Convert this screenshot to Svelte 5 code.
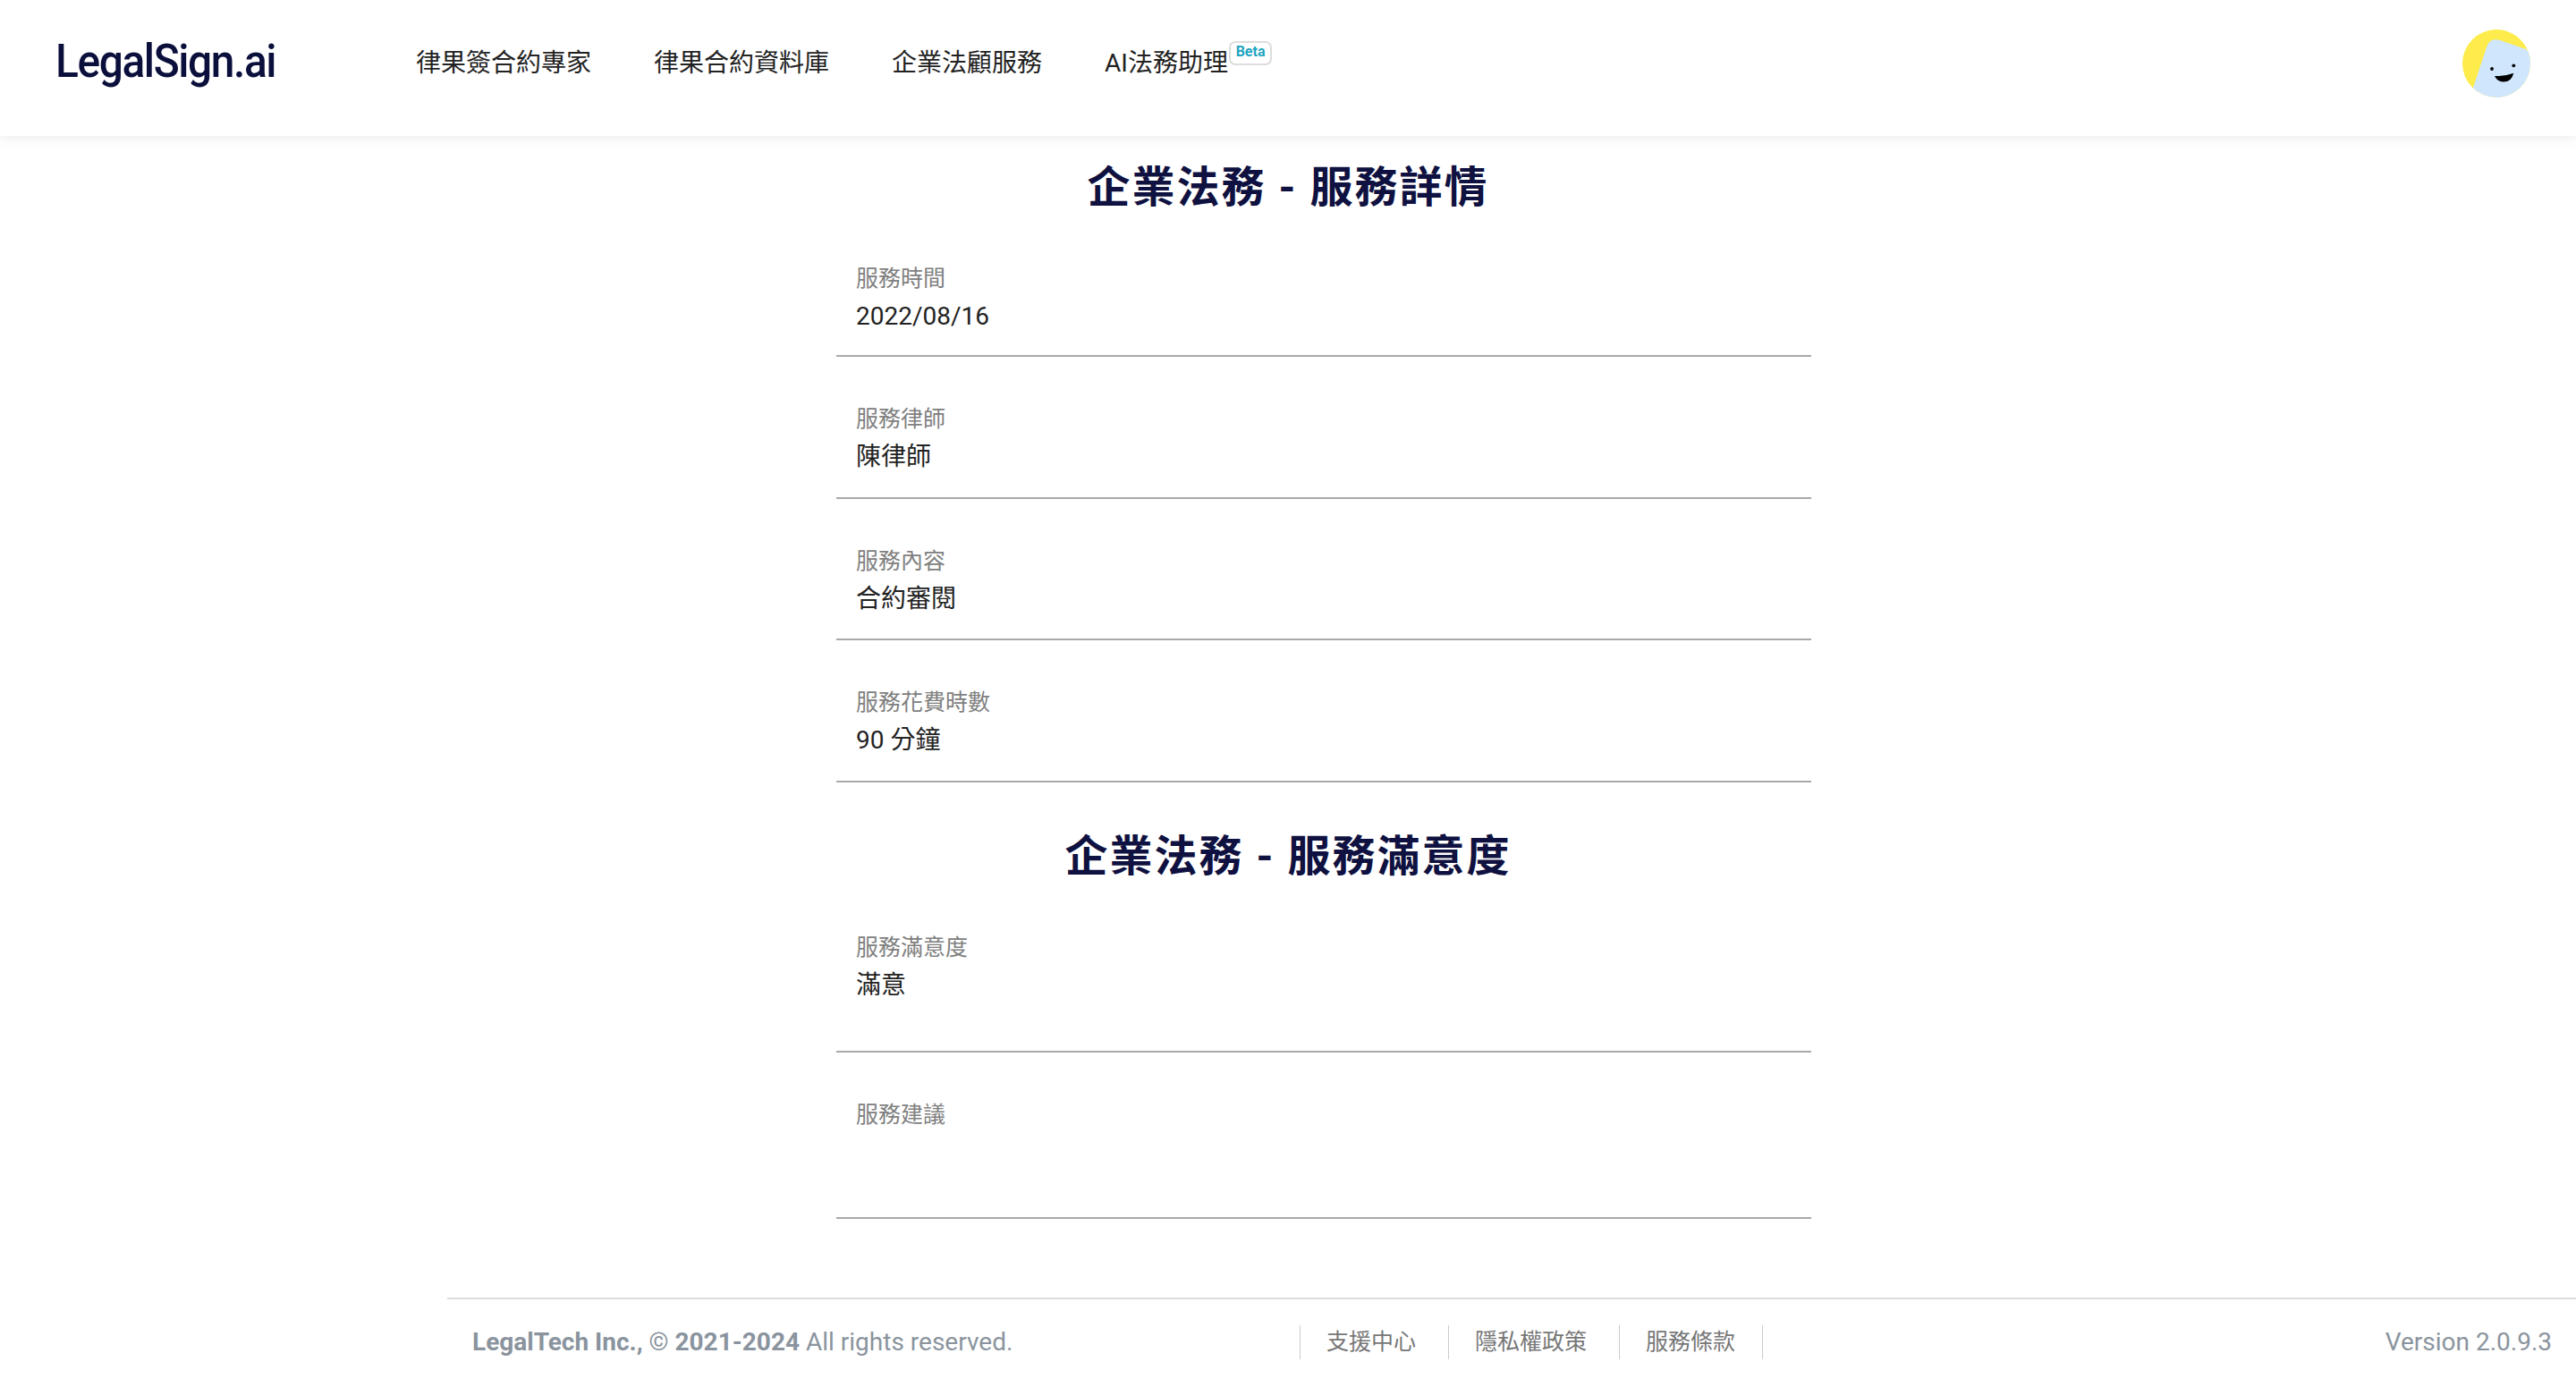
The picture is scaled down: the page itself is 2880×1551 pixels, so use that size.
<script lang="ts">
	const navItems = ['律果簽合約專家', '律果合約資料庫', '企業法顧服務'];
	const details = [
		{ label: '服務時間', value: '2022/08/16' },
		{ label: '服務律師', value: '陳律師' },
		{ label: '服務內容', value: '合約審閱' },
		{ label: '服務花費時數', value: '90 分鐘' }
	];
	const footerLinks = ['支援中心', '隱私權政策', '服務條款'];
</script>

<header class="topbar">
	<div class="logo-box"><div class="logo">LegalSign.ai</div></div>
	<nav class="nav">
		{#each navItems as item}
			<span>{item}</span>
		{/each}
		<span class="ai-item">AI法務助理<em class="beta">Beta</em></span>
	</nav>
	<svg class="avatar" viewBox="0 0 76 76" aria-label="avatar">
		<defs>
			<clipPath id="round"><circle cx="38" cy="38" r="38" /></clipPath>
		</defs>
		<g clip-path="url(#round)">
			<rect width="76" height="76" fill="#fdec4b" />
			<path d="M12 65 L27 20 Q30 9 42 12 L71 22 L90 40 L60 90 L20 90 Z" fill="#cfe6fd" />
			<circle cx="33" cy="44" r="1.9" fill="#000" />
			<circle cx="57.3" cy="40.3" r="1.9" fill="#000" />
			<path d="M36 52 Q47 52.5 57.3 48.7 Q55 58.5 46 58.5 Q39 58.5 36 52 Z" fill="#000" />
		</g>
	</svg>
</header>

<main class="content">
	<h2 class="first">企業法務 - 服務詳情</h2>
	<section class="fields">
		{#each details as row}
			<div class="field">
				<div class="label">{row.label}</div>
				<div class="value">{row.value}</div>
			</div>
		{/each}
	</section>
	<h2 class="second">企業法務 - 服務滿意度</h2>
	<section class="fields">
		<div class="field tall">
			<div class="label">服務滿意度</div>
			<div class="value">滿意</div>
		</div>
		<div class="field advice">
			<div class="label">服務建議</div>
			<div class="value"></div>
		</div>
	</section>
</main>

<footer class="footer">
	<div class="copy"><b>LegalTech Inc.,</b> © <b>2021-2024</b> All rights reserved.</div>
	<div class="links">
		{#each footerLinks as link}
			<span>{link}</span>
		{/each}
	</div>
	<div class="version">Version 2.0.9.3</div>
</footer>

<style>
	:global(body) {
		margin: 0;
		background: #fff;
		font-family: Roboto, 'Noto Sans CJK TC', sans-serif;
		font-weight: 400;
		color: #222;
	}
	.topbar {
		display: flex;
		align-items: center;
		height: 152px;
		padding: 0 51px 0 62px;
		background: #fff;
		box-shadow: 0 2px 14px rgba(0, 0, 0, 0.08);
		box-sizing: border-box;
	}
	.logo-box {
		width: 403px;
		margin-top: -16px;
	}
	.logo {
		display: inline-block;
		font-size: 52px;
		font-weight: 500;
		letter-spacing: -1.5px;
		color: #0b0f3b;
		transform: scaleX(0.92);
		transform-origin: left center;
	}
	.nav {
		display: flex;
		gap: 70px;
		flex: 1;
		font-size: 28px;
		margin-top: -16px;
		color: #222;
	}
	.ai-item {
		position: relative;
	}
	.beta {
		position: absolute;
		left: 139px;
		top: -2px;
		box-sizing: border-box;
		width: 48px;
		height: 27px;
		border: 2px solid #ddd;
		border-radius: 7px;
		font-size: 16px;
		font-style: normal;
		font-weight: 700;
		line-height: 19px;
		text-align: center;
		color: #1fa5c0;
	}
	.avatar {
		width: 76px;
		height: 76px;
		margin-top: -10px;
	}
	.content {
		display: flex;
		flex-direction: column;
	}
	h2 {
		margin: 0;
		font-size: 48px;
		font-weight: 700;
		letter-spacing: 2px;
		line-height: 64px;
		text-align: center;
		color: #0f1140;
	}
	.first {
		margin-top: 26px;
		margin-bottom: 24px;
	}
	.second {
		margin-top: 51px;
		margin-bottom: 40px;
	}
	.fields {
		width: 1090px;
		margin-left: 935px;
		display: flex;
		flex-direction: column;
	}
	.field {
		height: 158.67px;
		box-sizing: border-box;
		padding: 52px 22px 0;
		border-bottom: 2px solid #a9a9a9;
	}
	.field:first-child {
		height: 133px;
		padding-top: 28px;
	}
	.field.tall {
		height: 147px;
		padding-top: 12px;
	}
	.field.advice {
		height: 186px;
		padding-top: 52px;
	}
	.label {
		font-size: 25px;
		line-height: 36px;
		color: #808080;
	}
	.value {
		margin-top: 4px;
		font-size: 28px;
		line-height: 40px;
		color: #222;
	}
	.footer {
		display: flex;
		align-items: center;
		margin: 88px 0 0 500px;
		height: 100px;
		padding: 0 27px 2px 28px;
		border-top: 2px solid #ddd;
		box-sizing: border-box;
		color: #8a949e;
		font-size: 28px;
	}
	.copy {
		width: 925px;
	}
	.copy b {
		font-weight: 700;
	}
	.links {
		display: flex;
		flex: 1;
		font-size: 25px;
		color: #777;
		border-left: 1px solid #ccc;
		height: 38px;
		line-height: 38px;
	}
	.links span {
		padding: 0 36px 0 29px;
		border-right: 1px solid #ccc;
	}
	.links span:last-child {
		padding-right: 30px;
	}
</style>
